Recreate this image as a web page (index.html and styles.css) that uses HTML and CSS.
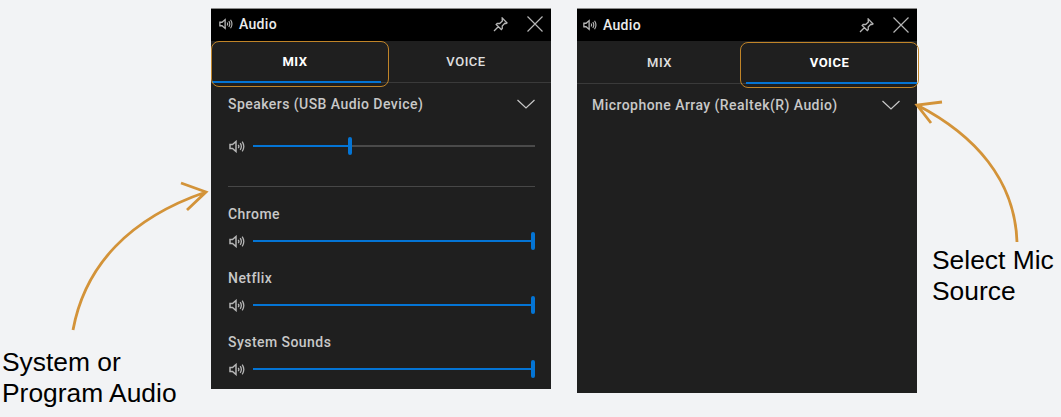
FILE: index.html
```html
<!DOCTYPE html>
<html lang="en">

<head>
    <meta charset="UTF-8">
    <title>Audio mix and voice</title>
    <link rel="stylesheet" href="styles.css">
</head>

<body>
    <svg class="defs" width="0" height="0">
        <symbol id="speaker" viewBox="0 0 16 13">
            <path d="M1 4.500h2.500L7 1.500v10L3.500 8.500H1z" fill="none" stroke="currentColor" stroke-width="1.500" />
            <path d="M9.200 4.800q1.300 1.700 0 3.400M11.200 3.200q2.300 3.300 0 6.600M13.200 1.600q3.200 4.900 0 9.800" fill="none" stroke="currentColor" stroke-width="1.300" />
        </symbol>
        <symbol id="pin" viewBox="0 0 15 15">
            <path d="M9.200 1l4.800 4.800-1 .7-1.200-.2-2.600 2.700.1 2.500-1 1L3.200 7.400l1-1 2.500.1 2.700-2.600-.2-1.200zM5.500 9.500L1 14" fill="none" stroke="currentColor" stroke-width="1.300" />
        </symbol>
        <symbol id="close" viewBox="0 0 16 16">
            <path d="M.5.500l15 15M15.500.500l-15 15" fill="none" stroke="currentColor" stroke-width="1.200" />
        </symbol>
        <symbol id="chevron" viewBox="0 0 18 10">
            <path d="M.5 1L9 9l8.500-8" fill="none" stroke="currentColor" stroke-width="1.200" />
        </symbol>
    </svg>

    <div class="stage">
        <!-- Mix tab -->
        <div class="panel panel-mix">
            <div class="titlebar">
                <svg class="title-icon"><use href="#speaker" /></svg>
                <span class="title">Audio</span>
                <svg class="pin"><use href="#pin" /></svg>
                <svg class="close"><use href="#close" /></svg>
            </div>
            <div class="tabs">
                <div class="tab active">MIX</div>
                <div class="tab">VOICE</div>
            </div>
            <div class="device">
                <span>Speakers (USB Audio Device)</span>
                <svg class="chevron"><use href="#chevron" /></svg>
            </div>
            <div class="slider master">
                <svg class="vol-icon"><use href="#speaker" /></svg>
                <div class="track"><div class="fill" style="width: 35%"><i class="thumb"></i></div></div>
            </div>
            <div class="divider"></div>
            <div class="app">
                <div class="app-name">Chrome</div>
                <div class="slider">
                    <svg class="vol-icon"><use href="#speaker" /></svg>
                    <div class="track"><div class="fill" style="width: 100%"><i class="thumb"></i></div></div>
                </div>
            </div>
            <div class="app">
                <div class="app-name">Netflix</div>
                <div class="slider">
                    <svg class="vol-icon"><use href="#speaker" /></svg>
                    <div class="track"><div class="fill" style="width: 100%"><i class="thumb"></i></div></div>
                </div>
            </div>
            <div class="app">
                <div class="app-name">System Sounds</div>
                <div class="slider">
                    <svg class="vol-icon"><use href="#speaker" /></svg>
                    <div class="track"><div class="fill" style="width: 100%"><i class="thumb"></i></div></div>
                </div>
            </div>
            <div class="callout callout-mix"></div>
        </div>

        <!-- Voice tab -->
        <div class="panel panel-voice">
            <div class="titlebar">
                <svg class="title-icon"><use href="#speaker" /></svg>
                <span class="title">Audio</span>
                <svg class="pin"><use href="#pin" /></svg>
                <svg class="close"><use href="#close" /></svg>
            </div>
            <div class="tabs">
                <div class="tab">MIX</div>
                <div class="tab active">VOICE</div>
            </div>
            <div class="device">
                <span>Microphone Array (Realtek(R) Audio)</span>
                <svg class="chevron"><use href="#chevron" /></svg>
            </div>
            <div class="callout callout-voice"></div>
        </div>

        <!-- Arrows and captions -->
        <svg class="arrows" width="1061" height="417" viewBox="0 0 1061 417">
            <path d="M73 330C85 265 130 218 206 192M181 183l25 9-19 18" />
            <path d="M1017 242C1015 180 975 135 917 105M942 102l-25 3 14 18" />
        </svg>
        <p class="caption caption-left">System or<br>Program Audio</p>
        <p class="caption caption-right">Select Mic<br>Source</p>
    </div>
</body>

</html>
```

FILE: styles.css
```css
* {
    box-sizing: border-box;
}

body {
    margin: 0;
    background-color: #f2f3f5;
    font-family: "Roboto", "Liberation Sans", sans-serif;
}

.defs {
    position: absolute;
}

.stage {
    position: relative;
    width: 1061px;
    height: 417px;
    overflow: hidden;
}

/* windows on the canvas */
.panel {
    position: absolute;
    top: 8px;
    width: 340px;
    background-color: #1f1f1f;
    border-top: 1px solid #8a8a8a;
}

.panel-mix {
    left: 211px;
    height: 381px;
}

.panel-voice {
    left: 577px;
    height: 385px;
}

.titlebar {
    display: flex;
    align-items: center;
    height: 32px;
    padding-left: 8px;
    padding-bottom: 2px;
    background-color: #000;
    color: #b5b5b5;
}

.panel-voice .titlebar {
    padding-left: 6px;
    padding-bottom: 0;
}

.title-icon {
    width: 14px;
    height: 12px;
}

.title {
    margin-left: 6px;
    color: #ececec;
    font-size: 14px;
    font-weight: 500;
    letter-spacing: 0.3px;
}

.pin {
    width: 15px;
    height: 15px;
    margin-left: auto;
}

.close {
    width: 16px;
    height: 16px;
    margin-left: 19px;
    margin-right: 8px;
}

.tabs {
    display: flex;
    height: 42px;
    border-bottom: 1px solid #3a3a3a;
}

.panel-voice .tabs {
    height: 43px;
}

.tab {
    position: relative;
    display: flex;
    align-items: center;
    justify-content: center;
    width: 50%;
    color: #e0e0e0;
    font-size: 13px;
    font-weight: 500;
    letter-spacing: 0.5px;
}

.panel-voice .tab {
    width: 165px;
}

.panel-voice .tab.active {
    width: 175px;
    padding-left: 2px;
}

.tab.active {
    padding-right: 2px;
    color: #fff;
    font-weight: 700;
}

.tab.active::after {
    content: "";
    position: absolute;
    left: 1px;
    right: 0;
    bottom: -1px;
    height: 2px;
    background-color: #0474d4;
}

.panel-voice .tab.active::after {
    left: 4px;
}

.device {
    display: flex;
    align-items: center;
    justify-content: space-between;
    height: 42px;
    padding: 0 16px 0 17px;
    color: #c8c8c8;
    font-size: 14px;
    font-weight: 500;
    letter-spacing: 0.45px;
}

.panel-voice .device {
    height: 43px;
    padding: 0 17px 2px 15px;
}

.chevron {
    width: 18px;
    height: 10px;
}

.slider {
    display: flex;
    align-items: center;
    height: 18px;
    padding: 0 16px 0 18px;
    color: #b5b5b5;
}

.slider.master {
    margin-top: 12px;
}

.vol-icon {
    width: 16px;
    height: 13px;
    margin-right: 8px;
}

.track {
    flex: 1;
    height: 2px;
    background-color: #4a4a4a;
}

.fill {
    position: relative;
    height: 2px;
    background-color: #0474d4;
}

.thumb {
    position: absolute;
    right: 0;
    top: -8px;
    width: 4px;
    height: 18px;
    border-radius: 2px;
    background-color: #0474d4;
}

.divider {
    height: 1px;
    margin: 31px 16px 0 17px;
    background-color: #474747;
}

.app {
    margin-bottom: 20px;
}

.divider + .app {
    margin-top: 19px;
}

.app-name {
    height: 18px;
    margin-bottom: 8px;
    padding-left: 17px;
    color: #c8c8c8;
    font-size: 14px;
    font-weight: 500;
    line-height: 17px;
    letter-spacing: 0.45px;
}

/* orange outlines drawn over the tabs */
.callout {
    position: absolute;
    top: 32px;
    height: 46px;
    border: 1px solid #c08428;
    border-radius: 8px;
}

.callout-mix {
    left: 0;
    width: 178px;
}

.callout-voice {
    left: 163px;
    width: 179px;
    top: 33px;
}

.arrows {
    position: absolute;
    left: 0;
    top: 0;
    fill: none;
    stroke: #d39339;
    stroke-width: 2.800px;
}

.caption {
    position: absolute;
    margin: 0;
    color: #000;
    font-family: "Liberation Sans", Arial, sans-serif;
    font-size: 26.400px;
    line-height: 31px;
}

.caption-left {
    left: 2px;
    top: 347px;
}

.caption-right {
    left: 932px;
    top: 245px;
}
```
